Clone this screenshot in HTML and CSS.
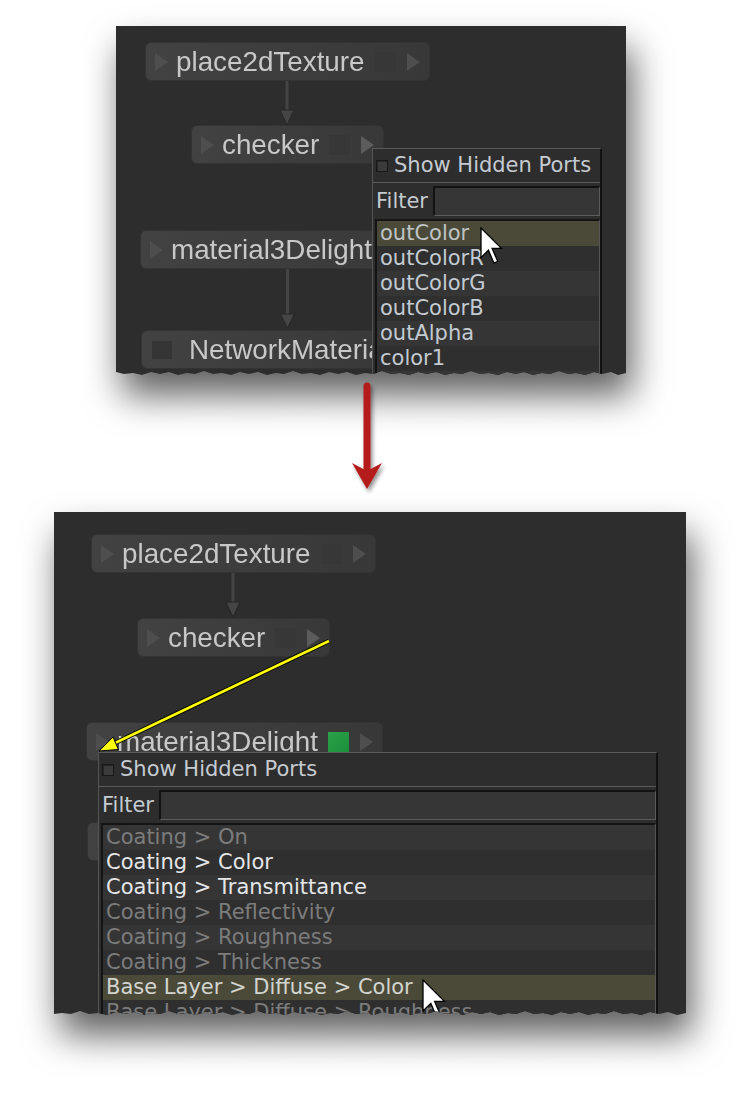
FILE: index.html
```html
<!DOCTYPE html>
<html>
<head>
<meta charset="utf-8">
<link rel="stylesheet" href="styles.css">
</head>
<body>
<div class="page">
  <div class="shot-wrap shot-wrap-1">
    <div class="shot shot-1">
      <svg class="wires" width="510" height="350" viewBox="0 0 510 350">
        <g class="wire">
          <line x1="171" y1="55" x2="171" y2="86"/>
          <polygon points="164,84 178,84 171,99"/>
          <line x1="171.5" y1="243" x2="171.5" y2="290"/>
          <polygon points="164.5,288 178.5,288 171.5,302"/>
        </g>
      </svg>
      <div class="node n1-place"><span class="tri tri-in"></span><span class="label">place2dTexture</span><span class="sq"></span><span class="tri tri-out"></span></div>
      <div class="node n1-checker"><span class="tri tri-in"></span><span class="label">checker</span><span class="sq"></span><span class="tri tri-out tri-lit"></span></div>
      <div class="node n1-mat"><span class="tri tri-in"></span><span class="label">material3Delight</span><span class="sq sq-green"></span><span class="tri tri-out"></span></div>
      <div class="node n1-net"><span class="sq sq-net"></span><span class="label">NetworkMaterial</span></div>

      <div class="popup popup-1">
        <div class="popup-head"><span class="checkbox"></span><span class="head-text">Show Hidden Ports</span></div>
        <div class="filter-row"><span class="filter-label">Filter</span><span class="filter-input"></span></div>
        <div class="list">
          <div class="row row-hl">outColor</div>
          <div class="row">outColorR</div>
          <div class="row">outColorG</div>
          <div class="row">outColorB</div>
          <div class="row">outAlpha</div>
          <div class="row">color1</div>
          <div class="row"></div>
        </div>
      </div>
      <svg class="cursor cursor-1" width="24" height="38" viewBox="-1 -1 24 38"><polygon points="0,0 0,29.6 7.4,22.2 13,35.2 16.7,33.3 11.1,20.4 20.4,20.4"/></svg>
    </div>
  </div>

  <div class="divider">
    <svg width="740" height="136" viewBox="0 376 740 136">
      <defs>
        <filter id="rshadow" x="-50%" y="-20%" width="200%" height="140%">
          <feDropShadow dx="2" dy="3" stdDeviation="2" flood-color="#000" flood-opacity="0.45"/>
        </filter>
      </defs>
      <g filter="url(#rshadow)" fill="#b41b1b">
        <line x1="367" y1="386" x2="367" y2="472" stroke="#b41b1b" stroke-width="7" stroke-linecap="round"/>
        <polygon points="352,463 367,471 382,463 367,489"/>
      </g>
    </svg>
  </div>

  <div class="shot-wrap shot-wrap-2">
    <div class="shot shot-2">
      <svg class="wires" width="632" height="504" viewBox="0 0 632 504">
        <g class="wire">
          <line x1="179" y1="61" x2="179" y2="92"/>
          <polygon points="172,90 186,90 179,105"/>
        </g>
      </svg>
      <div class="node n2-place"><span class="tri tri-in"></span><span class="label">place2dTexture</span><span class="sq"></span><span class="tri tri-out"></span></div>
      <div class="node n2-checker"><span class="tri tri-in"></span><span class="label">checker</span><span class="sq"></span><span class="tri tri-out tri-lit"></span></div>
      <div class="node n2-mat"><span class="tri tri-in"></span><span class="label">material3Delight</span><span class="sq sq-green"></span><span class="tri tri-out"></span></div>
      <div class="node n2-net"></div>

      <svg class="link" width="632" height="504" viewBox="0 0 632 504">
        <line x1="275" y1="129" x2="61" y2="231" stroke="#000" stroke-width="4.5"/>
        <line x1="275" y1="129" x2="61" y2="231" stroke="#ffff00" stroke-width="2.6"/>
        <polygon points="45,239 64.5,237.5 59,225" fill="#ffff00" stroke="#000" stroke-width="1"/>
      </svg>

      <div class="popup popup-2">
        <div class="popup-head"><span class="checkbox"></span><span class="head-text">Show Hidden Ports</span></div>
        <div class="filter-row"><span class="filter-label">Filter</span><span class="filter-input"></span></div>
        <div class="list">
          <div class="row dim">Coating &gt; On</div>
          <div class="row bright">Coating &gt; Color</div>
          <div class="row bright">Coating &gt; Transmittance</div>
          <div class="row dim">Coating &gt; Reflectivity</div>
          <div class="row dim">Coating &gt; Roughness</div>
          <div class="row dim">Coating &gt; Thickness</div>
          <div class="row row-hl hl-2">Base Layer &gt; Diffuse &gt; Color</div>
          <div class="row dim">Base Layer &gt; Diffuse &gt; Roughness</div>
        </div>
      </div>
      <svg class="cursor cursor-2" width="24" height="40" viewBox="-1 -1 24 40"><polygon points="0,0 0,31 7.8,23.3 13.6,37 17.5,35 11.6,21.4 21.4,21.4"/></svg>
    </div>
  </div>
</div>
</body>
</html>
```

FILE: styles.css
```css
* { box-sizing: border-box; }

body {
  margin: 0;
  background: #ffffff;
  font-family: "DejaVu Sans", sans-serif;
}

.page {
  width: 740px;
  height: 1098px;
  padding-top: 26px;
  overflow: hidden;
}

.shot-wrap {
  width: max-content;
  filter: drop-shadow(6px 22px 18px rgba(0, 0, 0, 0.62));
}

.shot-wrap-1 { margin-left: 116px; }
.shot-wrap-2 { margin-left: 54px; }

.shot {
  position: relative;
  overflow: hidden;
  background: #2d2d2d;
}

.shot-1 {
  width: 510px;
  height: 350px;
  clip-path: polygon(0 0, 510px 0, 510px 347px, 502px 349px, 495px 346px, 486px 348px, 478px 346px, 469px 349px, 460px 347px, 452px 348px, 443px 345px, 434px 348px, 426px 347px, 417px 349px, 408px 346px, 400px 348px, 391px 346px, 382px 349px, 373px 347px, 364px 348px, 355px 345px, 346px 348px, 338px 347px, 329px 349px, 320px 346px, 311px 348px, 302px 346px, 293px 349px, 284px 347px, 275px 348px, 266px 345px, 257px 348px, 249px 347px, 240px 349px, 231px 346px, 222px 348px, 213px 346px, 204px 349px, 195px 347px, 186px 348px, 177px 345px, 168px 348px, 160px 347px, 151px 349px, 142px 346px, 133px 348px, 124px 346px, 115px 349px, 106px 347px, 97px 348px, 88px 345px, 79px 348px, 71px 347px, 62px 349px, 53px 346px, 44px 348px, 35px 346px, 26px 349px, 17px 347px, 8px 348px, 0 346px);
}

.shot-2 {
  width: 632px;
  height: 504px;
  clip-path: polygon(0 0, 632px 0, 632px 501px, 623px 503px, 614px 500px, 605px 502px, 596px 500px, 587px 503px, 578px 501px, 569px 502px, 560px 499px, 551px 502px, 543px 501px, 534px 503px, 525px 500px, 516px 502px, 507px 500px, 498px 503px, 489px 501px, 480px 502px, 471px 499px, 462px 502px, 454px 501px, 445px 503px, 436px 500px, 427px 502px, 418px 500px, 409px 503px, 400px 501px, 391px 502px, 382px 499px, 373px 502px, 365px 501px, 356px 503px, 347px 500px, 338px 502px, 329px 500px, 320px 503px, 311px 501px, 302px 502px, 293px 499px, 284px 502px, 276px 501px, 267px 503px, 258px 500px, 249px 502px, 240px 500px, 231px 503px, 222px 501px, 213px 502px, 204px 499px, 195px 502px, 187px 501px, 178px 503px, 169px 500px, 160px 502px, 151px 500px, 142px 503px, 133px 501px, 124px 502px, 115px 499px, 106px 502px, 98px 501px, 89px 503px, 80px 500px, 71px 502px, 62px 500px, 53px 503px, 44px 501px, 35px 502px, 26px 499px, 17px 502px, 8px 501px, 0 502px);
}

/* connector wires */
.wires {
  position: absolute;
  left: 0;
  top: 0;
}

.wire line {
  stroke: #444444;
  stroke-width: 3;
}

.wire polygon {
  fill: #454545;
  stroke: #262626;
  stroke-width: 1;
}

.link {
  position: absolute;
  left: 0;
  top: 0;
}

/* nodes */
.node {
  position: absolute;
  display: flex;
  align-items: center;
  height: 39px;
  padding: 0 9px;
  border: 1px solid #333333;
  border-radius: 6px;
  background: linear-gradient(90deg, #424242, #383838);
  white-space: nowrap;
}

.label {
  font-family: "Liberation Sans", Arial, sans-serif;
  font-size: 27.8px;
  line-height: 39px;
  color: #c8c8c8;
  margin-right: 10px;
}

.tri {
  width: 0;
  height: 0;
  border-top: 9.5px solid transparent;
  border-bottom: 9.5px solid transparent;
  border-left: 13px solid #4e4e4e;
}

.tri-in { margin-right: 8px; }
.tri-out { margin-left: 11px; }
.tri-lit { border-left-color: #5c5c5c; }

.sq {
  width: 21px;
  height: 20px;
  background: #373737;
}

.sq-green { background: linear-gradient(135deg, #2aa34a, #1d8f3a); }

.sq-net {
  width: 20px;
  height: 18px;
  margin-left: 1px;
  margin-right: 17px;
  background: #353535;
}

.n1-place { left: 29px; top: 16px; }
.n1-checker { left: 75px; top: 99px; }
.n1-mat { left: 24px; top: 204px; }
.n1-net { left: 25px; top: 304px; }

.n2-place { left: 37px; top: 22px; }
.n2-checker { left: 83px; top: 106px; }
.n2-mat { left: 32px; top: 210px; }
.n2-net { left: 33px; top: 310px; width: 240px; }

/* popup */
.popup {
  position: absolute;
  background: #2d2d2d;
  border-top: 1px solid #5a5a5a;
  border-left: 1px solid #555555;
  border-right: 2px solid #111111;
  font-size: 21px;
  color: #c5cbd1;
}

.popup-1 { left: 256px; top: 122px; width: 230px; }
.popup-2 { left: 44px; top: 240px; width: 560px; }

.popup-head {
  display: flex;
  align-items: center;
  height: 34px;
  padding-left: 3px;
  border-bottom: 1px solid #5a5a5a;
}

.checkbox {
  width: 12px;
  height: 12px;
  margin-right: 6px;
  border: 1px solid #181818;
  background: #3b3b3b;
  box-shadow: inset 1px 1px 0 #262626;
}

.head-text,
.filter-label {
  line-height: 25px;
  white-space: nowrap;
}

.filter-row {
  display: flex;
  align-items: center;
  height: 36px;
  padding-left: 3px;
}

.filter-label { margin-right: 5px; }

.filter-input {
  flex: 1;
  height: 30px;
  background: #363636;
  border-top: 2px solid #121212;
  border-left: 2px solid #121212;
  border-right: 1px solid #5c5c5c;
  border-bottom: 1px solid #5c5c5c;
}

.list {
  margin-left: 2px;
  border-top: 2px solid #141414;
  border-left: 2px solid #141414;
  border-right: 1px solid #555555;
}

.row {
  height: 25px;
  line-height: 25px;
  padding-left: 3px;
  white-space: nowrap;
  overflow: hidden;
  background: #353535;
  color: #c3cad2;
}

.row:nth-child(even) { background: #2f2f2f; }

.row-hl,
.row-hl:nth-child(even) {
  background: #4b4a39;
  color: #bfc4c4;
}

.dim { color: #7c7c7c; }
.bright { color: #e4e6e8; }
.hl-2 { color: #d3d5d0; }

/* cursors */
.cursor {
  position: absolute;
}

.cursor polygon {
  fill: #ffffff;
  stroke: #000000;
  stroke-width: 1.3;
  stroke-linejoin: miter;
}

.cursor-1 { left: 364px; top: 201px; }
.cursor-2 { left: 368px; top: 467px; }

/* red arrow between shots */
.divider {
  position: relative;
  z-index: 1;
  height: 136px;
}

.divider svg { display: block; }
```
